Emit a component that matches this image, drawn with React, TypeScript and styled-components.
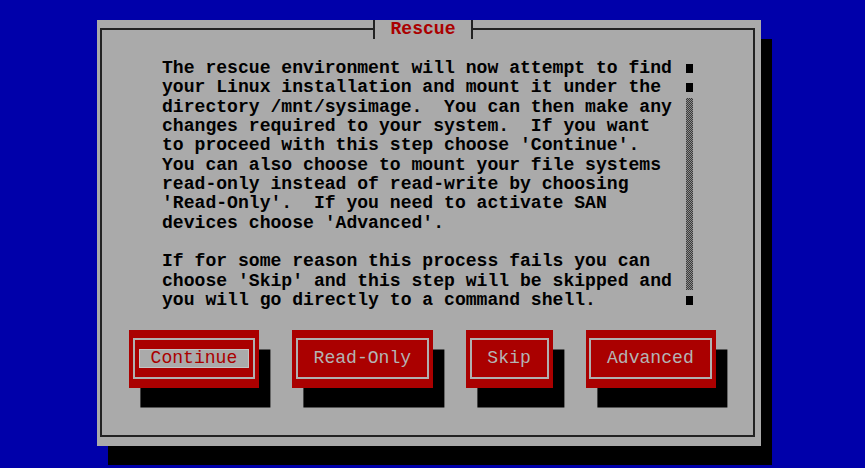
import React from "react";
import styled, { createGlobalStyle } from "styled-components";

const COL = 10.85;
const ROW = 19.36;
const MONO = `"Liberation Mono", "DejaVu Sans Mono", monospace`;

const Global = createGlobalStyle`
  html, body { margin: 0; padding: 0; background: #0000aa; }
  body { width: 865px; height: 468px; overflow: hidden; }
`;

const Screen = styled.div`
  box-sizing: border-box;
  width: 865px;
  height: 468px;
  background: #0000aa;
  padding: 20px 0 0 97px;
  font-family: ${MONO};
`;

const Window = styled.div`
  position: relative;
  box-sizing: border-box;
  width: 664px;
  height: 426px;
  background: #aaaaaa;
  box-shadow: 11px 19px 0 0 #000;
  padding: 8px 6.5px 9.5px 3px;
  display: flex;
`;

const Frame = styled.div`
  flex: 1;
  box-sizing: border-box;
  border: 2px solid #222;
  display: flex;
  flex-direction: column;
`;

const Title = styled.div`
  position: absolute;
  left: 276px;
  top: 0;
  box-sizing: border-box;
  width: 100px;
  height: ${ROW}px;
  border-left: 2px solid #222;
  border-right: 2px solid #222;
  background: #aaaaaa;
  display: flex;
  align-items: center;
  justify-content: center;
`;

const TitleText = styled.span`
  font-family: ${MONO};
  font-size: 18.08px;
  line-height: ${ROW}px;
  font-weight: 700;
  color: #aa0000;
  white-space: pre;
`;

const ContentRow = styled.div`
  display: flex;
  margin: 28.8px 0 0 60px;
`;

const TextBlock = styled.div`
  width: 522px;
  font-family: ${MONO};
  font-size: 18.08px;
  line-height: ${ROW}px;
  font-weight: 700;
  color: #000;
  white-space: pre;
`;

const ScrollBar = styled.div`
  width: 11px;
  display: flex;
  flex-direction: column;
  align-items: center;
`;

const ScrollCell = styled.div`
  height: ${ROW}px;
  display: flex;
  align-items: center;
  justify-content: center;
`;

const Square = styled.div`
  width: 7px;
  height: 9px;
  background: #000;
`;

const Trough = styled.div<{ $rows: number }>`
  width: 7px;
  height: ${(p) => p.$rows * ROW - 1.4}px;
  margin: 0.7px 0;
  background: repeating-conic-gradient(#3a3a3a 0% 25%, #8c8c8c 0% 50%) 0 0 / 2px 2px;
`;

const ButtonRow = styled.div`
  display: flex;
  gap: 32.8px;
  margin: 19.5px 0 0 27.3px;
`;

const ButtonBox = styled.div<{ $cols: number }>`
  box-sizing: border-box;
  width: ${(p) => p.$cols * COL}px;
  height: 57.7px;
  background: #aa0000;
  box-shadow: 11.4px 19.5px 0 0 #000;
  padding: 8.3px 4.3px 8.7px 3.4px;
  display: flex;
`;

const ButtonFrame = styled.div`
  flex: 1;
  box-sizing: border-box;
  border: 2px solid #b0b0b0;
  display: flex;
  align-items: center;
  justify-content: center;
`;

const ButtonLabel = styled.div<{ $focused?: boolean }>`
  box-sizing: border-box;
  height: ${ROW}px;
  padding: 0 ${COL}px;
  font-family: ${MONO};
  font-size: 18.08px;
  line-height: ${ROW - 2}px;
  white-space: pre;
  color: ${(p) => (p.$focused ? "#aa0000" : "#b4b4b4")};
  background: ${(p) => (p.$focused ? "#aaaaaa" : "transparent")};
  border: 1px solid ${(p) => (p.$focused ? "#c4c4c4" : "transparent")};
`;

const TEXT = `The rescue environment will now attempt to find
your Linux installation and mount it under the
directory /mnt/sysimage.  You can then make any
changes required to your system.  If you want
to proceed with this step choose 'Continue'.
You can also choose to mount your file systems
read-only instead of read-write by choosing
'Read-Only'.  If you need to activate SAN
devices choose 'Advanced'.

If for some reason this process fails you can
choose 'Skip' and this step will be skipped and
you will go directly to a command shell.`;

const BUTTONS = [
  { label: "Continue", focused: true },
  { label: "Read-Only", focused: false },
  { label: "Skip", focused: false },
  { label: "Advanced", focused: false },
];

function Button({ label, focused }: { label: string; focused: boolean }) {
  return (
    <ButtonBox $cols={label.length + 4}>
      <ButtonFrame>
        <ButtonLabel $focused={focused}>{label}</ButtonLabel>
      </ButtonFrame>
    </ButtonBox>
  );
}

export default function App() {
  return (
    <>
      <Global />
      <Screen>
        <Window>
          <Title>
            <TitleText>Rescue</TitleText>
          </Title>
          <Frame>
            <ContentRow>
              <TextBlock>{TEXT}</TextBlock>
              <ScrollBar>
                <ScrollCell>
                  <Square />
                </ScrollCell>
                <ScrollCell>
                  <Square />
                </ScrollCell>
                <Trough $rows={10} />
                <ScrollCell>
                  <Square />
                </ScrollCell>
              </ScrollBar>
            </ContentRow>
            <ButtonRow>
              {BUTTONS.map((b) => (
                <Button key={b.label} label={b.label} focused={b.focused} />
              ))}
            </ButtonRow>
          </Frame>
        </Window>
      </Screen>
    </>
  );
}
